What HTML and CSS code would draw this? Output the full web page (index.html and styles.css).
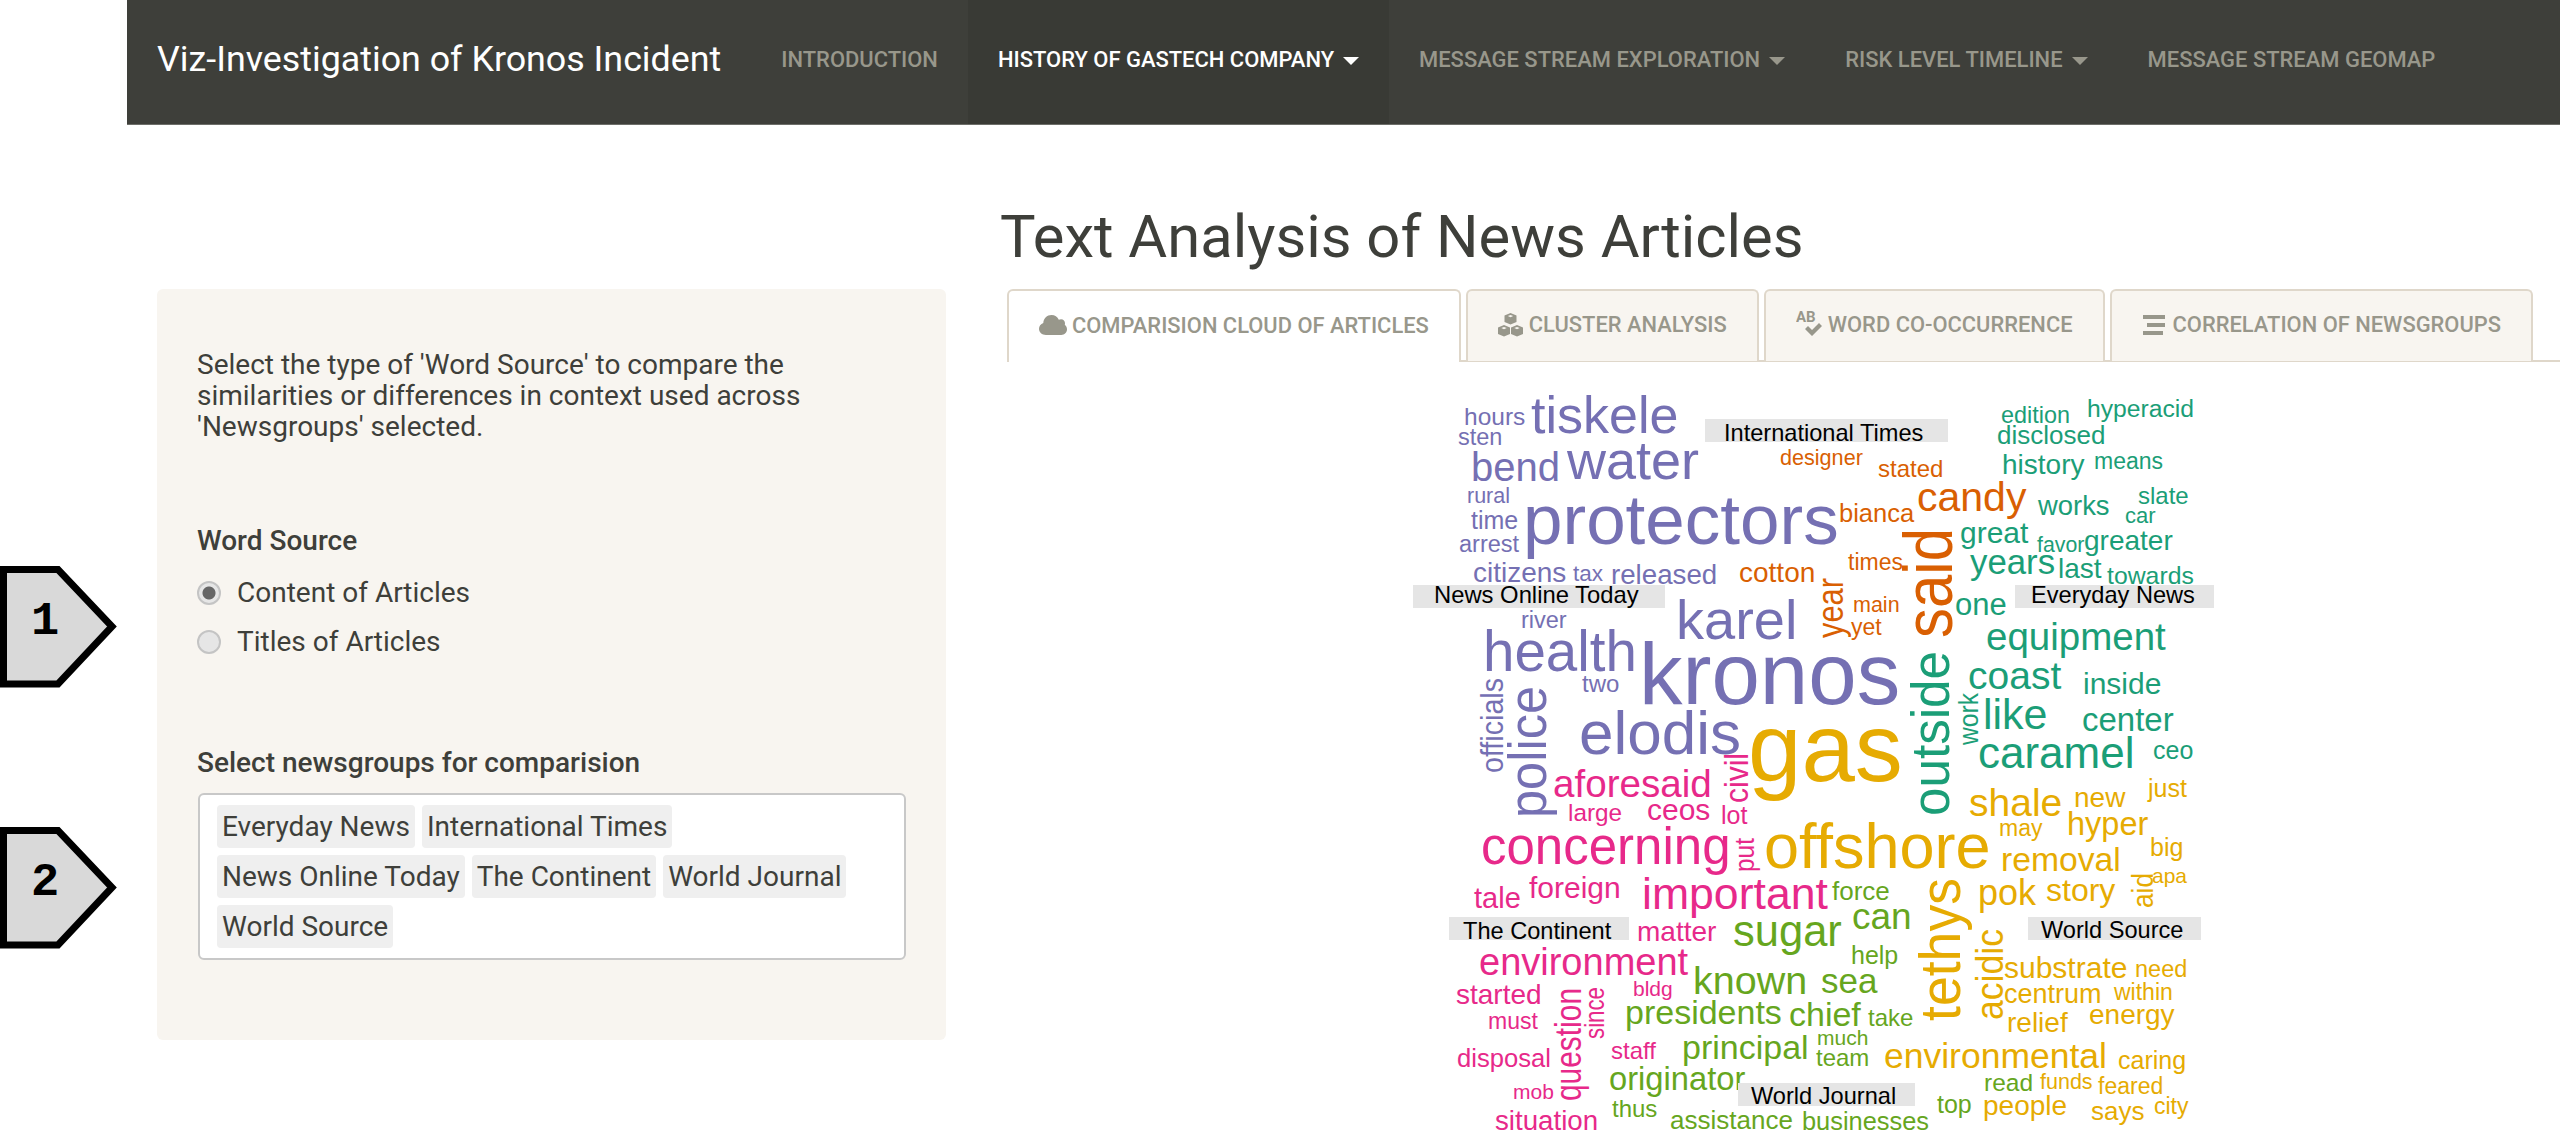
FILE: index.html
```html
<!DOCTYPE html>
<html lang="en">
<head>
  <meta charset="UTF-8">
  <meta name="viewport" content="width=device-width, initial-scale=1.0">
  <title>Viz-Investigation of Kronos Incident</title>
  <link rel="stylesheet" href="styles.css">
</head>
<body>

  <!-- numbered callouts sit in the left gutter, over the page -->
  <div class="callout callout-one">
    <svg width="118" height="122" viewBox="0 0 118 122"><polygon points="3.5,3.5 58,3.5 112,60.5 58,118 3.5,118" fill="#d9d9d9" stroke="#000" stroke-width="7"/></svg>
    <span class="callout-num">1</span>
  </div>
  <div class="callout callout-two">
    <svg width="118" height="122" viewBox="0 0 118 122"><polygon points="3.5,3.5 58,3.5 112,60.5 58,118 3.5,118" fill="#d9d9d9" stroke="#000" stroke-width="7"/></svg>
    <span class="callout-num">2</span>
  </div>

  <div class="page">
    <nav class="navbar">
      <a class="brand" href="#">Viz-Investigation of Kronos Incident</a>
      <ul class="nav-links">
        <li><a href="#">Introduction</a></li>
        <li class="active"><a href="#">History of GasTech Company <span class="caret"></span></a></li>
        <li><a href="#">Message Stream Exploration <span class="caret"></span></a></li>
        <li><a href="#">Risk Level Timeline <span class="caret"></span></a></li>
        <li><a href="#">Message Stream Geomap</a></li>
      </ul>
    </nav>

    <div class="content">
      <aside class="well">
        <p class="help-text">Select the type of 'Word Source' to compare the similarities or differences in context used across 'Newsgroups' selected.</p>

        <p class="field-label">Word Source</p>
        <label class="radio"><input type="radio" name="source" checked> Content of Articles</label>
        <label class="radio"><input type="radio" name="source"> Titles of Articles</label>

        <p class="field-label field-label-groups">Select newsgroups for comparision</p>
        <div class="select-box">
          <span class="chip">Everyday News</span>
          <span class="chip">International Times</span>
          <span class="chip">News Online Today</span>
          <span class="chip">The Continent</span>
          <span class="chip">World Journal</span>
          <span class="chip">World Source</span>
        </div>
      </aside>

      <main class="main">
        <h1>Text Analysis of News Articles</h1>
        <ul class="tabs">
          <li class="tab active">
            <svg class="tab-icon" width="28" height="20" viewBox="0 0 28 20"><path d="M7 20C3 20 0 17.300 0 13.800C0 11 1.700 8.800 4.300 7.900C4.500 3.500 8 0 12.500 0C15.800 0 18.500 1.900 19.800 4.700C20.500 4.400 21.200 4.200 22 4.200C24.500 4.200 26 6 26 8.300C26 8.800 25.900 9.300 25.800 9.700C27.200 10.800 28 12.500 28 14.300C28 17.500 25.500 20 22.300 20Z"/></svg>
            Comparision Cloud of Articles
          </li>
          <li class="tab">
            <svg class="tab-icon" width="25" height="24" viewBox="0 0 25 24"><path d="M12.500 0L18.500 2.500V9L12.500 11.500L6.500 9V2.500ZM12.500 2L9.800 3.100L12.500 4.200L15.200 3.100Z" fill-rule="evenodd"/><path d="M6 12L12 14.500V21L6 23.500L0 21V14.500ZM6 14L3.300 15.100L6 16.200L8.700 15.100Z" fill-rule="evenodd"/><path d="M19 12L25 14.500V21L19 23.500L13 21V14.500ZM19 14L16.300 15.100L19 16.200L21.700 15.100Z" fill-rule="evenodd"/></svg>
            Cluster Analysis
          </li>
          <li class="tab">
            <svg class="tab-icon" width="26" height="27" viewBox="0 0 26 27"><text x="0" y="11" class="icon-letters">AB</text><path d="M9 18L12 15L16 19L23 12L26 15L16 25Z"/></svg>
            Word Co-Occurrence
          </li>
          <li class="tab">
            <svg class="tab-icon tab-icon-bars" width="22" height="20" viewBox="0 0 22 20"><rect x="0" y="0" width="22" height="4"/><rect x="4" y="8" width="18" height="4"/><rect x="0" y="16" width="20" height="4"/></svg>
            Correlation of Newsgroups
          </li>
        </ul>

        <!-- viewBox uses full page coordinates, so words read as their place in the picture -->
        <svg class="cloud" width="820" height="766" viewBox="1400 380 820 766">
          <g class="purple">
            <text x="1463" y="424" font-size="24.500">hours</text>
            <text x="1530" y="432" font-size="52">tiskele</text>
            <text x="1457" y="444" font-size="23.500">sten</text>
            <text x="1470" y="480" font-size="40">bend</text>
            <text x="1566" y="478" font-size="54">water</text>
            <text x="1466" y="502" font-size="21.500">rural</text>
            <text x="1470" y="528" font-size="25">time</text>
            <text x="1458" y="551" font-size="23.500">arrest</text>
            <text x="1522" y="543" font-size="71">protectors</text>
            <text x="1472" y="581" font-size="28">citizens</text>
            <text x="1572" y="580" font-size="22.500">tax</text>
            <text x="1610" y="583" font-size="27.700">released</text>
            <text x="1520" y="627" font-size="23.500">river</text>
            <text x="1675" y="638" font-size="56">karel</text>
            <text x="1482" y="670" font-size="56.500">health</text>
            <text x="1638" y="703" font-size="87">kronos</text>
            <text x="1581" y="691" font-size="24">two</text>
            <text x="1578" y="753" font-size="62">elodis</text>
            <text transform="rotate(-90 1502 772)" x="1502" y="772" font-size="32" textLength="95" lengthAdjust="spacingAndGlyphs">officials</text>
            <text transform="rotate(-90 1545 817)" x="1545" y="817" font-size="54" textLength="132" lengthAdjust="spacingAndGlyphs">police</text>
          </g>
          <g class="orange">
            <text x="1779" y="464" font-size="21.600">designer</text>
            <text x="1877" y="476" font-size="24">stated</text>
            <text x="1916" y="510" font-size="41">candy</text>
            <text x="1838" y="521" font-size="25.500">bianca</text>
            <text x="1738" y="581" font-size="28">cotton</text>
            <text x="1847" y="569" font-size="23">times</text>
            <text x="1852" y="611" font-size="21.500">main</text>
            <text x="1850" y="634" font-size="23">yet</text>
            <text transform="rotate(-90 1951 637)" x="1951" y="637" font-size="69" textLength="110" lengthAdjust="spacingAndGlyphs">said</text>
            <text transform="rotate(-90 1842 637)" x="1842" y="637" font-size="36" textLength="60" lengthAdjust="spacingAndGlyphs">year</text>
          </g>
          <g class="teal">
            <text x="2000" y="422" font-size="23.400">edition</text>
            <text x="2086" y="416" font-size="24.700">hyperacid</text>
            <text x="1996" y="443" font-size="26">disclosed</text>
            <text x="2001" y="473" font-size="28">history</text>
            <text x="2093" y="468" font-size="23">means</text>
            <text x="2137" y="503" font-size="24">slate</text>
            <text x="2037" y="514" font-size="27.400">works</text>
            <text x="2124" y="522" font-size="22">car</text>
            <text x="1959" y="542" font-size="30">great</text>
            <text x="2036" y="551" font-size="21.300">favor</text>
            <text x="2083" y="549" font-size="28">greater</text>
            <text x="1969" y="573" font-size="34.800">years</text>
            <text x="2057" y="577" font-size="28">last</text>
            <text x="2106" y="583" font-size="24.800">towards</text>
            <text x="1954" y="614" font-size="31">one</text>
            <text x="1985" y="649" font-size="38.500">equipment</text>
            <text x="1967" y="688" font-size="39">coast</text>
            <text x="2082" y="693" font-size="30">inside</text>
            <text x="1982" y="728" font-size="43">like</text>
            <text x="2081" y="730" font-size="33">center</text>
            <text x="1977" y="767" font-size="44">caramel</text>
            <text x="2152" y="758" font-size="25">ceo</text>
            <text transform="rotate(-90 1977 744)" x="1977" y="744" font-size="27" textLength="52" lengthAdjust="spacingAndGlyphs">work</text>
            <text transform="rotate(-90 1948 815)" x="1948" y="815" font-size="54" textLength="165" lengthAdjust="spacingAndGlyphs">outside</text>
          </g>
          <g class="gold">
            <text x="1747" y="780" font-size="96">gas</text>
            <text x="1968" y="815" font-size="39">shale</text>
            <text x="2073" y="806" font-size="28">new</text>
            <text x="2147" y="796" font-size="25">just</text>
            <text x="1998" y="835" font-size="23">may</text>
            <text x="2066" y="834" font-size="32.500">hyper</text>
            <text x="1763" y="867" font-size="63">offshore</text>
            <text x="2000" y="870" font-size="33.700">removal</text>
            <text x="2149" y="855" font-size="25">big</text>
            <text x="2151" y="882" font-size="21">apa</text>
            <text x="1977" y="904" font-size="36">pok</text>
            <text x="2045" y="900" font-size="32">story</text>
            <text x="2003" y="977" font-size="30">substrate</text>
            <text x="2134" y="976" font-size="23.500">need</text>
            <text x="2003" y="1002" font-size="27">centrum</text>
            <text x="2113" y="999" font-size="23">within</text>
            <text x="2006" y="1031" font-size="28">relief</text>
            <text x="2088" y="1023" font-size="28">energy</text>
            <text x="1883" y="1067" font-size="35.500">environmental</text>
            <text x="2117" y="1068" font-size="25">caring</text>
            <text x="2039" y="1088" font-size="21.500">funds</text>
            <text x="2097" y="1093" font-size="23">feared</text>
            <text x="1982" y="1114" font-size="28">people</text>
            <text x="2090" y="1119" font-size="26">says</text>
            <text x="2153" y="1113" font-size="23">city</text>
            <text transform="rotate(-90 2152 907)" x="2152" y="907" font-size="30" textLength="35" lengthAdjust="spacingAndGlyphs">aid</text>
            <text transform="rotate(-90 1959 1020)" x="1959" y="1020" font-size="58" textLength="143" lengthAdjust="spacingAndGlyphs">tethys</text>
            <text transform="rotate(-90 2002 1019)" x="2002" y="1019" font-size="38" textLength="91" lengthAdjust="spacingAndGlyphs">acidic</text>
          </g>
          <g class="green">
            <text x="1831" y="899" font-size="26">force</text>
            <text x="1851" y="928" font-size="37">can</text>
            <text x="1732" y="945" font-size="43.500">sugar</text>
            <text x="1850" y="963" font-size="25">help</text>
            <text x="1692" y="993" font-size="39.500">known</text>
            <text x="1820" y="992" font-size="35">sea</text>
            <text x="1624" y="1023" font-size="34">presidents</text>
            <text x="1788" y="1025" font-size="34">chief</text>
            <text x="1867" y="1025" font-size="24">take</text>
            <text x="1681" y="1058" font-size="34">principal</text>
            <text x="1816" y="1044" font-size="21">much</text>
            <text x="1815" y="1065" font-size="24">team</text>
            <text x="1608" y="1089" font-size="32.700">originator</text>
            <text x="1611" y="1116" font-size="24">thus</text>
            <text x="1669" y="1128" font-size="26">assistance</text>
            <text x="1801" y="1129" font-size="25.400">businesses</text>
            <text x="1936" y="1112" font-size="25">top</text>
            <text x="1983" y="1090" font-size="24.500">read</text>
          </g>
          <g class="pink">
            <text x="1552" y="796" font-size="38.600">aforesaid</text>
            <text x="1567" y="820" font-size="24.300">large</text>
            <text x="1646" y="819" font-size="30">ceos</text>
            <text x="1720" y="823" font-size="25">lot</text>
            <text x="1480" y="863" font-size="51">concerning</text>
            <text x="1473" y="907" font-size="29">tale</text>
            <text x="1528" y="897" font-size="30">foreign</text>
            <text x="1641" y="908" font-size="44.600">important</text>
            <text x="1636" y="940" font-size="28">matter</text>
            <text x="1478" y="974" font-size="38">environment</text>
            <text x="1632" y="995" font-size="21">bldg</text>
            <text x="1455" y="1003" font-size="28">started</text>
            <text x="1487" y="1028" font-size="23">must</text>
            <text x="1456" y="1066" font-size="25.600">disposal</text>
            <text x="1610" y="1058" font-size="24">staff</text>
            <text x="1512" y="1098" font-size="21">mob</text>
            <text x="1494" y="1129" font-size="27.700">situation</text>
            <text transform="rotate(-90 1747 802)" x="1747" y="802" font-size="33" textLength="50" lengthAdjust="spacingAndGlyphs">civil</text>
            <text transform="rotate(-90 1753 871)" x="1753" y="871" font-size="27" textLength="34" lengthAdjust="spacingAndGlyphs">put</text>
            <text transform="rotate(-90 1580 1100)" x="1580" y="1100" font-size="36" textLength="113" lengthAdjust="spacingAndGlyphs">question</text>
            <text transform="rotate(-90 1603 1038)" x="1603" y="1038" font-size="27" textLength="52" lengthAdjust="spacingAndGlyphs">since</text>
          </g>
          <g class="group-labels">
            <rect x="1704" y="418" width="243" height="23"/>
            <text x="1723" y="440" font-size="23.600">International Times</text>
            <rect x="1412" y="584" width="252" height="23"/>
            <text x="1433" y="602" font-size="23.800">News Online Today</text>
            <rect x="2014" y="584" width="199" height="23"/>
            <text x="2030" y="602" font-size="23.600">Everyday News</text>
            <rect x="1448" y="916" width="180" height="23"/>
            <text x="1462" y="938" font-size="23.600">The Continent</text>
            <rect x="2027" y="916" width="173" height="23"/>
            <text x="2040" y="937" font-size="23.600">World Source</text>
            <rect x="1737" y="1082" width="177" height="23"/>
            <text x="1750" y="1103" font-size="23.600">World Journal</text>
          </g>
        </svg>
      </main>
    </div>
  </div>

</body>
</html>
```

FILE: styles.css
```css
body {
  margin: 0;
  background-color: #fff;
  color: #3e3f3a;
  font-family: Roboto, "Liberation Sans", sans-serif;
  font-size: 28px;
  height: 1146px;
  overflow: hidden;
}

.page {
  margin-left: 127px;
}

/* navbar */
.navbar {
  display: flex;
  align-items: stretch;
  height: 124px;
  padding-left: 30px;
  background-color: #3e3f3a;
  border-bottom: 1px solid #6d6e69;
}

.brand {
  align-self: center;
  margin: 0 30px 6px 0;
  color: #fff;
  font-size: 35.800px;
  text-decoration: none;
  white-space: nowrap;
}

.nav-links {
  display: flex;
  margin: 0;
  padding: 0;
  list-style: none;
}

.nav-links a {
  display: flex;
  align-items: center;
  gap: 9px;
  box-sizing: border-box;
  height: 100%;
  padding: 0 30px 6px;
  color: #98978b;
  font-size: 21.950px;
  font-weight: 500;
  text-decoration: none;
  text-transform: uppercase;
  white-space: nowrap;
}

.nav-links .active a {
  background-color: #393a35;
  color: #fff;
}

.caret {
  border-top: 8px solid currentColor;
  border-left: 8px solid transparent;
  border-right: 8px solid transparent;
  margin-top: 4px;
}

/* callouts */
.callout {
  position: absolute;
  left: 0;
  width: 118px;
  height: 122px;
}

.callout-one {
  top: 566px;
}

.callout-two {
  top: 827px;
}

.callout svg {
  display: block;
}

.callout-num {
  position: absolute;
  left: 31px;
  top: -5px;
  width: 28px;
  color: #000;
  font-family: "Liberation Mono", monospace;
  font-size: 47px;
  font-weight: 700;
  line-height: 122px;
  text-align: center;
}

/* page body */
.content {
  display: flex;
  padding-left: 30px;
}

.well {
  box-sizing: border-box;
  width: 789px;
  height: 751px;
  margin-top: 164px;
  margin-right: 54px;
  padding: 60px 40px 0;
  background-color: #f8f5f0;
  border-radius: 6px;
}

.help-text {
  margin: 0;
  line-height: 31px;
}

.field-label {
  margin: 83px 0 12px;
  font-weight: 500;
  line-height: 31px;
}

.field-label-groups {
  margin: 81px 0 15px;
}

.radio {
  display: flex;
  align-items: center;
  gap: 16px;
  height: 49px;
}

.radio input {
  appearance: none;
  box-sizing: border-box;
  flex: none;
  width: 24px;
  height: 24px;
  margin: 0;
  border: 2px solid #c4c4c4;
  border-radius: 50%;
  background-color: #e6e6e6;
}

.radio input:checked {
  background: radial-gradient(circle, #666 0, #666 6px, #e6e6e6 7px);
}

.select-box {
  display: flex;
  flex-wrap: wrap;
  align-content: flex-start;
  gap: 7px;
  box-sizing: border-box;
  width: 708px;
  height: 167px;
  margin-left: 1px;
  padding: 10px 40px 0 17px;
  background-color: #fff;
  border: 2px solid #c8c8c8;
  border-radius: 6px;
}

.chip {
  padding: 0 5px;
  background-color: #efefef;
  border-radius: 4px;
  line-height: 43px;
}

.main {
  flex: 1;
  min-width: 0;
}

h1 {
  box-sizing: border-box;
  height: 164px;
  margin: 0;
  padding-top: 68px;
  font-size: 59.700px;
  font-weight: 400;
  line-height: 88px;
  white-space: nowrap;
}

/* tabs */
.tabs {
  display: flex;
  gap: 5px;
  box-sizing: border-box;
  height: 73px;
  margin: 0 0 0 7px;
  padding: 0;
  list-style: none;
  border-bottom: 2px solid #dfd7ca;
}

.tab {
  display: flex;
  align-items: center;
  gap: 6px;
  box-sizing: border-box;
  height: 72px;
  padding: 0 30px 3px;
  background-color: #f8f5f0;
  border: 2px solid #dfd7ca;
  border-bottom: 0;
  border-radius: 6px 6px 0 0;
  color: #98978b;
  font-size: 21.900px;
  font-weight: 500;
  text-transform: uppercase;
  white-space: nowrap;
}

.tab.active {
  height: 73px;
  gap: 5px;
  background-color: #fff;
}

.tab-icon {
  fill: #98978b;
}

.tab-icon-bars {
  margin: 0 2px 0 1px;
}

.icon-letters {
  font-family: Roboto, sans-serif;
  font-size: 15px;
  font-weight: 700;
}

/* word cloud */
.cloud {
  display: block;
  margin: 19px 0 0 401px;
  font-family: "Liberation Sans", Arial, sans-serif;
}

.purple { fill: #7570b3; }
.orange { fill: #d95f02; }
.teal { fill: #1b9e77; }
.gold { fill: #e6ab02; }
.green { fill: #66a61e; }
.pink { fill: #e7298a; }

.group-labels rect { fill: #e5e5e5; }
.group-labels text { fill: #000; }
```
